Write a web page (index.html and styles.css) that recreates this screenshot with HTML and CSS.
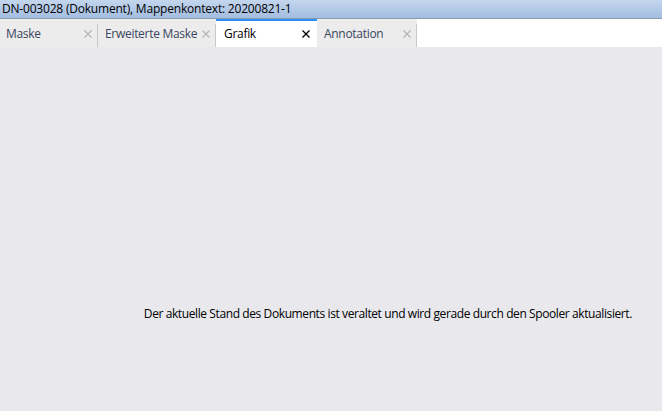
FILE: index.html
```html
<!DOCTYPE html>
<html lang="de">
<head>
    <meta charset="UTF-8">
    <title>DN-003028</title>
    <link rel="stylesheet" href="styles.css">
</head>
<body>
    <div class="window">
        <div class="title-bar">DN-003028 (Dokument), Mappenkontext: 20200821-1</div>
        <div class="tab-strip">
            <div class="tab tab-maske">
                <span class="tab-label">Maske</span>
                <svg class="tab-close" width="8" height="8" viewBox="0 0 8 8"><path d="M0.5 0.5L7.5 7.5M7.5 0.5L0.5 7.5"/></svg>
            </div>
            <div class="tab tab-erweitert">
                <span class="tab-label">Erweiterte Maske</span>
                <svg class="tab-close" width="8" height="8" viewBox="0 0 8 8"><path d="M0.5 0.5L7.5 7.5M7.5 0.5L0.5 7.5"/></svg>
            </div>
            <div class="tab tab-grafik active">
                <span class="tab-label">Grafik</span>
                <svg class="tab-close" width="8" height="8" viewBox="0 0 8 8"><path d="M0.5 0.5L7.5 7.5M7.5 0.5L0.5 7.5"/></svg>
            </div>
            <div class="tab tab-annotation">
                <span class="tab-label">Annotation</span>
                <svg class="tab-close" width="8" height="8" viewBox="0 0 8 8"><path d="M0.5 0.5L7.5 7.5M7.5 0.5L0.5 7.5"/></svg>
            </div>
        </div>
        <div class="content">
            <p class="status-message">Der aktuelle Stand des Dokuments ist veraltet und wird gerade durch den Spooler aktualisiert.</p>
        </div>
    </div>
</body>
</html>
```

FILE: styles.css
```css
html, body {
    margin: 0;
    height: 100%;
}

body {
    font-family: 'Open Sans', 'Noto Sans', sans-serif;
    font-size: 12px;
    background: #e8e8ed;
}

.window {
    display: flex;
    flex-direction: column;
    height: 100%;
}

.title-bar {
    height: 18px;
    line-height: 18px;
    padding-left: 2px;
    color: #000;
    background: linear-gradient(to bottom, #c4d6ee, #a3bde0);
    border-bottom: 1px solid #8a9ab0;
    letter-spacing: -0.2px;
}

.tab-strip {
    display: flex;
    height: 28px;
    background: #fff;
}

.tab {
    display: flex;
    align-items: center;
    justify-content: space-between;
    box-sizing: border-box;
    padding: 0 6px 0 6px;
    background: #ececec;
    color: #3a4660;
    position: relative;
    letter-spacing: -0.3px;
}

/* separator line on the right, not full height */
.tab::after {
    content: '';
    position: absolute;
    right: 0;
    top: 5px;
    bottom: 0;
    width: 1px;
    background: #c8c8c8;
}

.tab-maske { width: 98px; }
.tab-erweitert { width: 118px; padding-left: 7px; }
.tab-grafik { width: 101px; padding-left: 8px; padding-right: 7px; }
.tab-annotation { width: 100px; padding-left: 7px; }

.tab.active {
    background: #fff;
    color: #000;
    border-top: 2px solid #2b8ef0;
    padding-bottom: 2px;
}

.tab.active::after {
    display: none;
}

.tab-close {
    flex: none;
    margin-top: 1px;
    stroke: #b4b4b4;
    stroke-width: 1.1;
    fill: none;
}

.tab.active .tab-close {
    stroke: #000;
    stroke-width: 1.3;
}

.content {
    flex: 1;
    position: relative;
}

.status-message {
    margin: 0;
    position: absolute;
    right: 30px;
    top: 258px;
    color: #000;
    letter-spacing: -0.4px;
}
```
